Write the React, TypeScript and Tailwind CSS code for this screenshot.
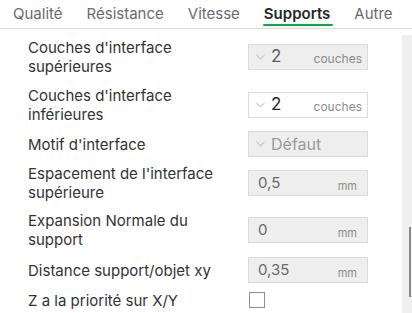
import React from 'react';

type Row = {
  label: string[];
  kind: 'combo' | 'text' | 'check';
  value?: string;
  unit?: string;
  enabled?: boolean;
  h: string;
  mt: string;
};

const tabs = ['Qualité', 'Résistance', 'Vitesse', 'Supports', 'Autre'];

const rows: Row[] = [
  { label: ["Couches d'interface", 'supérieures'], kind: 'combo', value: '2', unit: 'couches', h: 'h-[40px]', mt: 'mt-[8px]' },
  { label: ["Couches d'interface", 'inférieures'], kind: 'combo', value: '2', unit: 'couches', enabled: true, h: 'h-[40px]', mt: 'mt-[8px]' },
  { label: ["Motif d'interface"], kind: 'combo', value: 'Défaut', h: 'h-[26px]', mt: 'mt-[6px]' },
  { label: ["Espacement de l'interface", 'supérieure'], kind: 'text', value: '0,5', unit: 'mm', h: 'h-[40px]', mt: 'mt-[6px]' },
  { label: ['Expansion Normale du', 'support'], kind: 'text', value: '0', unit: 'mm', h: 'h-[40px]', mt: 'mt-[7px]' },
  { label: ['Distance support/objet xy'], kind: 'text', value: '0,35', unit: 'mm', h: 'h-[26px]', mt: 'mt-[7px]' },
  { label: ['Z a la priorité sur X/Y'], kind: 'check', h: 'h-[16px]', mt: 'mt-[9px]' },
];

const Chevron = () => (
  <svg width="9" height="6" viewBox="0 0 9 6" className="shrink-0">
    <path d="M0.5 1 L4.5 4.8 L8.5 1" fill="none" stroke="#b0b0b0" strokeWidth="1" />
  </svg>
);

const Field = ({ row }: { row: Row }) => {
  if (row.kind === 'check') {
    return <div className="w-[16px] h-[16px] border border-[#8f8f8f] bg-white ml-px" />;
  }
  const bg = row.enabled ? 'bg-white' : 'bg-[#eeeeee]';
  if (row.kind === 'combo') {
    return (
      <div className={`w-[120px] h-[26px] border border-[#dbdbdb] ${bg} flex items-center pl-[7px] pr-[5px]`}>
        <Chevron />
        {row.unit ? (
          <>
            <span className={`ml-[6px] text-[17px] leading-none -mt-[2px] ${row.enabled ? 'text-[#262626]' : 'text-[#5e5e5e]'}`}>
              {row.value}
            </span>
            <span className="ml-auto text-[12px] leading-none mt-[4px] text-[#8c8c8c]">{row.unit}</span>
          </>
        ) : (
          <span className="ml-[6px] text-[16px] leading-none text-[#9a9a9a]">{row.value}</span>
        )}
      </div>
    );
  }
  return (
    <div className={`w-[120px] h-[26px] border border-[#dbdbdb] ${bg} flex items-center pl-[9px] pr-[10px]`}>
      <span className="text-[15px] leading-none -mt-[2px] text-[#6b6b6b]">{row.value}</span>
      <span className="ml-auto text-[11px] leading-none mt-[6px] text-[#8c8c8c]">{row.unit}</span>
    </div>
  );
};

export default function App() {
  return (
    <div className="w-[412px] h-[313px] bg-white overflow-hidden flex flex-col" style={{ fontFamily: 'Inter, "Noto Sans", sans-serif' }}>
      <div className="h-[29px] border-b border-[#d9d9d9] flex items-start pl-[13px] shrink-0">
        {tabs.map((t) => (
          <div key={t} className="relative mr-[24px] h-[28px] flex flex-col items-center">
            <span
              className={`text-[15px] leading-none mt-[6px] ${
                t === 'Supports' ? 'font-semibold text-[#262626]' : 'text-[#6b6b6b]'
              }`}
            >
              {t}
            </span>
            {t === 'Supports' && <div className="absolute left-[-1px] right-[-3px] top-[24px] h-[2px] rounded-full bg-[#00ae42]" />}
          </div>
        ))}
      </div>
      <div className="flex flex-1">
        <div className="flex-1 flex flex-col pl-[28px]">
          {rows.map((r, i) => (
            <div key={i} className={`flex items-center ${r.h} ${r.mt}`}>
              <div className="w-[220px] text-[15px] leading-[19px] text-[#333333]">
                {r.label.map((l) => (
                  <div key={l}>{l}</div>
                ))}
              </div>
              <Field row={r} />
            </div>
          ))}
        </div>
        <div className="w-[10px] mt-[6px] bg-[#efefef] flex flex-col">
          <div className="h-[192px]" />
          <div className="ml-[7px] w-[2px] h-[70px] bg-[#8a8a8a]" />
        </div>
      </div>
    </div>
  );
}
